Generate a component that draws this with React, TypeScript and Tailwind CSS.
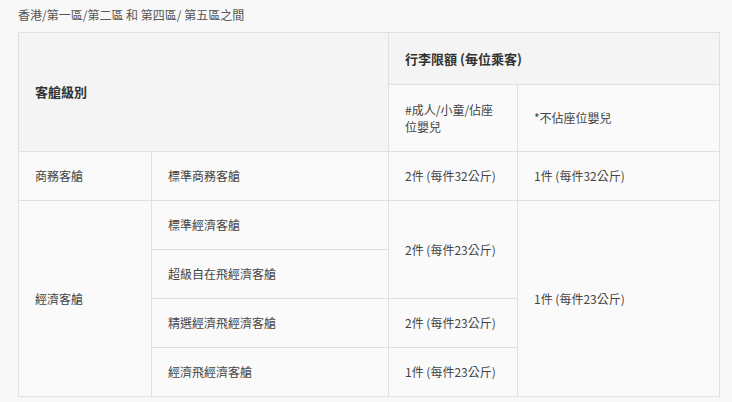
import React from "react";

const font = { fontFamily: '"Noto Sans CJK TC", "Noto Sans", sans-serif' };

export default function App() {
  const cell = "border border-[#e0e0e0] pl-4 pr-4 align-middle";
  return (
    <div className="w-[732px] h-[402px] bg-[#f8f8f8] text-[12px] text-[#444]" style={font}>
      <div className="pl-[18px] pt-[6px] h-[32px] leading-[18px] text-[#555]">香港/第一區/第二區 和 第四區/ 第五區之間</div>
      <table className="ml-[18px] border-collapse table-fixed w-[701px]">
        <colgroup>
          <col className="w-[133px]" />
          <col className="w-[237px]" />
          <col className="w-[129px]" />
          <col className="w-[202px]" />
        </colgroup>
        <tbody>
          <tr className="h-[52px] bg-[#f4f4f4]">
            <td colSpan={2} rowSpan={2} className={`${cell} font-bold text-[13px] text-[#333]`}>客艙級別</td>
            <td colSpan={2} className={`${cell} font-bold text-[13px] text-[#333]`}>行李限額 (每位乘客)</td>
          </tr>
          <tr className="h-[67px] bg-[#fafafa]">
            <td className={`${cell} leading-[17px]`}>#成人/小童/佔座位嬰兒</td>
            <td className={cell}>*不佔座位嬰兒</td>
          </tr>
          <tr className="h-[49px] bg-[#fafafa]">
            <td className={cell}>商務客艙</td>
            <td className={cell}>標準商務客艙</td>
            <td className={cell}>2件 (每件32公斤)</td>
            <td className={cell}>1件 (每件32公斤)</td>
          </tr>
          <tr className="h-[49px] bg-[#fafafa]">
            <td rowSpan={4} className={cell}>經濟客艙</td>
            <td className={cell}>標準經濟客艙</td>
            <td rowSpan={2} className={cell}>2件 (每件23公斤)</td>
            <td rowSpan={4} className={cell}>1件 (每件23公斤)</td>
          </tr>
          <tr className="h-[49px] bg-[#fafafa]">
            <td className={cell}>超級自在飛經濟客艙</td>
          </tr>
          <tr className="h-[49px] bg-[#fafafa]">
            <td className={cell}>精選經濟飛經濟客艙</td>
            <td className={cell}>2件 (每件23公斤)</td>
          </tr>
          <tr className="h-[49px] bg-[#fafafa]">
            <td className={cell}>經濟飛經濟客艙</td>
            <td className={cell}>1件 (每件23公斤)</td>
          </tr>
        </tbody>
      </table>
    </div>
  );
}
